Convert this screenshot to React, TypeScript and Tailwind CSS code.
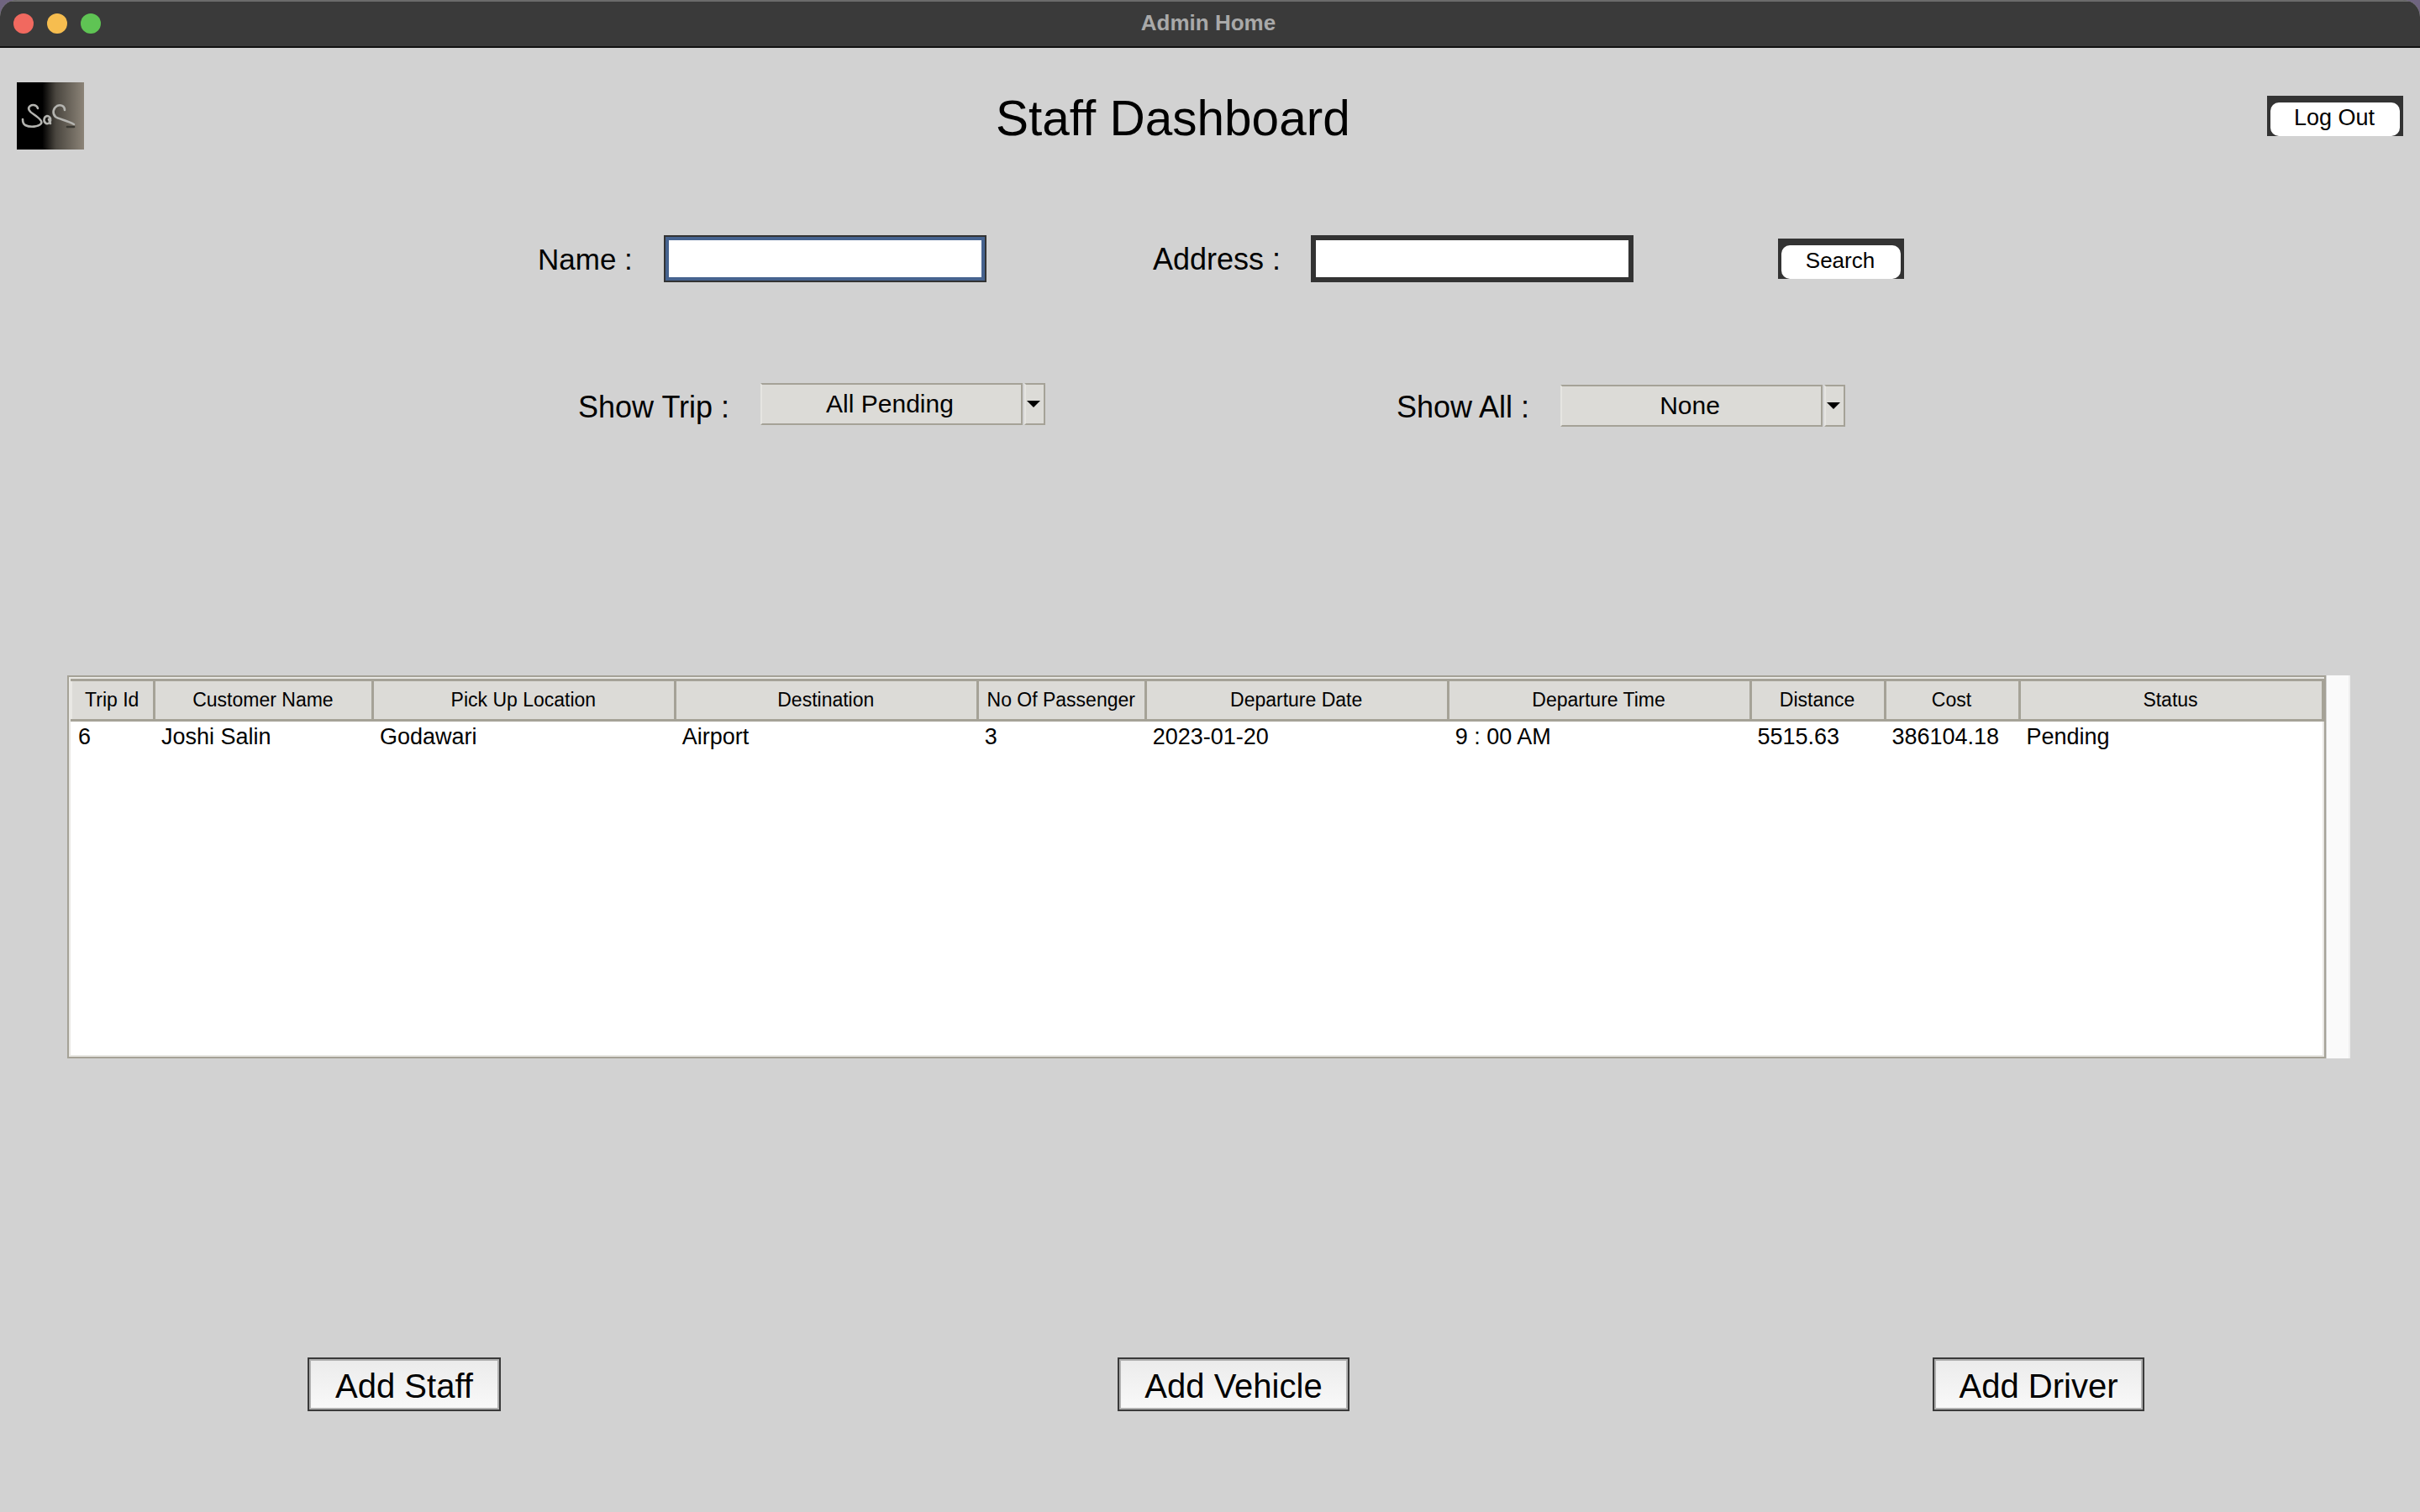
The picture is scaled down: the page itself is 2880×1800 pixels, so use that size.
// App.tsx
const columns = [
  { title: 'Trip Id', width: 'w-[99px]', value: '6' },
  { title: 'Customer Name', width: 'w-[260px]', value: 'Joshi Salin' },
  { title: 'Pick Up Location', width: 'w-[360px]', value: 'Godawari' },
  { title: 'Destination', width: 'w-[360px]', value: 'Airport' },
  { title: 'No Of Passenger', width: 'w-[200px]', value: '3' },
  { title: 'Departure Date', width: 'w-[360px]', value: '2023-01-20' },
  { title: 'Departure Time', width: 'w-[360px]', value: '9 : 00 AM' },
  { title: 'Distance', width: 'w-[160px]', value: '5515.63' },
  { title: 'Cost', width: 'w-[160px]', value: '386104.18' },
  { title: 'Status', width: 'w-[361px]', value: 'Pending' },
];

const Logo = () => (
  <div className="h-[80px] w-[80px] shrink-0 bg-[linear-gradient(90deg,#000_0%,#000_38%,#4a463f_58%,#8c8478_100%)]">
    <svg className="blur-[0.6px]" width="80" height="80" viewBox="0 0 80 80" fill="none" stroke="#b4b4b0" strokeWidth="2.6" strokeLinecap="round">
      <path d="M25 31 C24 27 19 26 16 28 C12 31 15 35 20 38 C26 42 31 46 29 49 C26 53 16 54 10 51 C7 49 7 46 7 44" />
      <path d="M36 40 C32 41 31 47 35 49 C38 50 41 47 40 43 C39 41 38 40 36 40 Z" />
      <path d="M38 44 L40 49" />
      <path d="M57 33 C57 28 52 26 48 28 C43 31 42 37 46 41 C50 44 60 45 68 50" />
      <path d="M60 53 L68 53" stroke="#3a3832" />
    </svg>
  </div>
);

const TopButton = ({ label, className }: { label: string; className: string }) => (
  <button className={`box-border h-[48px] shrink-0 border-x-[4px] border-t-[8px] border-[#333333] bg-[#333333] ${className}`}>
    <span className="flex h-full items-center justify-center rounded-[10px] bg-white pb-[3px] pr-[2px] text-black">{label}</span>
  </button>
);

const Dropdown = ({ value, className }: { value: string; className: string }) => (
  <div className={`flex h-[50px] w-[339px] shrink-0 ${className}`}>
    <div className="box-border flex h-full w-[312px] items-center justify-center border-2 border-[#a5a297] border-l-[#e6e5e1] bg-[#dcdbd7] pr-[4px] pb-[2px] text-[30px] text-black">
      {value}
    </div>
    <div className="ml-[2px] box-border flex h-full w-[25px] items-center justify-center border-2 border-[#a5a297] border-l-[#e6e5e1] bg-[#dcdbd7] pr-[4px]">
      <svg width="16" height="8" viewBox="0 0 16 8">
        <path d="M0 0H16L8 8Z" fill="#000" />
      </svg>
    </div>
  </div>
);

const BottomButton = ({ label, className }: { label: string; className: string }) => (
  <button className={`box-border h-[64px] shrink-0 border-[2px] border-[#3a3a3a] bg-[linear-gradient(180deg,#ebebeb,#f9f9f9)] pt-[2px] text-[40px] text-black shadow-[inset_0_0_0_2px_#b0b0b0] ${className}`}>
    {label}
  </button>
);

export default function App() {
  return (
    <div className="h-[1800px] w-[2880px] overflow-hidden bg-[#6f6480] font-['Liberation_Sans',Arial,sans-serif]">
      <div className="flex h-full flex-col overflow-hidden rounded-t-[20px] bg-[#d2d2d2]">
        {/* Title bar */}
        <div className="relative flex h-[57px] shrink-0 items-center justify-center border-t-2 border-b-2 border-t-[#6b6b6b] border-b-[#111111] bg-[#3a3a3a]">
          <div className="absolute left-[16px] top-[14px] flex gap-[16px]">
            <span className="h-[24px] w-[24px] rounded-full bg-[#f1695f]" />
            <span className="h-[24px] w-[24px] rounded-full bg-[#f6bd4f]" />
            <span className="h-[24px] w-[24px] rounded-full bg-[#5fc454]" />
          </div>
          <span className="ml-[-4px] mb-[2px] text-[26px] font-bold text-[#a9a9a9]">Admin Home</span>
        </div>

        {/* Header */}
        <div className="mt-[41px] flex items-start pl-[20px] pr-[20px]">
          <Logo />
          <h1 className="ml-[1085px] mt-[10px] text-[58.5px] font-normal leading-[66px] text-black">Staff Dashboard</h1>
          <TopButton label="Log Out" className="ml-auto mt-[16px] w-[162px] text-[27px]" />
        </div>

        {/* Search */}
        <div className="mt-[102px] flex h-[56px] items-center pl-[640px] text-[36px] text-black">
          <label className="w-[150px] shrink-0 pt-[2px] text-[35px]">Name :</label>
          <input className="box-border h-[56px] w-[384px] rounded-none border-2 border-[#333333] bg-white shadow-[inset_0_0_0_4px_#46638f] outline-none" />
          <label className="ml-[198px] w-[188px] shrink-0 pt-[2px]">Address :</label>
          <input className="box-border h-[56px] w-[384px] border-[6px] border-[#333333] bg-white outline-none" />
          <TopButton label="Search" className="ml-[172px] w-[150px] text-[26px]" />
        </div>

        {/* Filters */}
        <div className="mt-[120px] flex h-[52px] items-start pl-[688px] text-[36px] text-black">
          <label className="mt-[8px] w-[217px] shrink-0 leading-[42px]">Show Trip :</label>
          <Dropdown value="All Pending" className="" />
          <label className="ml-[418px] mt-[8px] w-[195px] shrink-0 leading-[42px]">Show All :</label>
          <Dropdown value="None" className="mt-[2px]" />
        </div>

        {/* Trips table */}
        <div className="ml-[80px] mt-[296px] flex h-[456px]">
          <div className="box-border h-full w-[2688px] border-2 border-[#a5a297] bg-white pl-[2px] pt-[2px] shadow-[inset_0_0_0_2px_#e9e8e4]">
            <table className="table-fixed border-collapse text-black">
              <thead>
                <tr>
                  {columns.map(col => (
                    <th
                      key={col.title}
                      className={`${col.width} box-border h-[48px] border-t-[3px] border-r-[3px] border-b-[3px] border-l-[2px] border-t-[#a5a297] border-r-[#a5a297] border-b-[#a5a297] border-l-[#e8e7e3] bg-[#dcdbd7] p-0 pr-[2px] text-center text-[23px] font-normal`}
                    >
                      {col.title}
                    </th>
                  ))}
                </tr>
              </thead>
              <tbody>
                <tr>
                  {columns.map(col => (
                    <td key={col.title} className="h-[40px] p-0 pb-[4px] pl-[8px] text-left text-[27px] leading-[36px]">
                      {col.value}
                    </td>
                  ))}
                </tr>
              </tbody>
            </table>
          </div>
          <div className="ml-[1px] h-full w-[28px] border-r-2 border-[#efefef] bg-[#fafafa]" />
        </div>

        {/* Actions */}
        <div className="mt-[356px] flex pl-[366px]">
          <BottomButton label="Add Staff" className="w-[230px]" />
          <BottomButton label="Add Vehicle" className="ml-[734px] w-[276px]" />
          <BottomButton label="Add Driver" className="ml-[694px] w-[252px]" />
        </div>
      </div>
    </div>
  );
}
